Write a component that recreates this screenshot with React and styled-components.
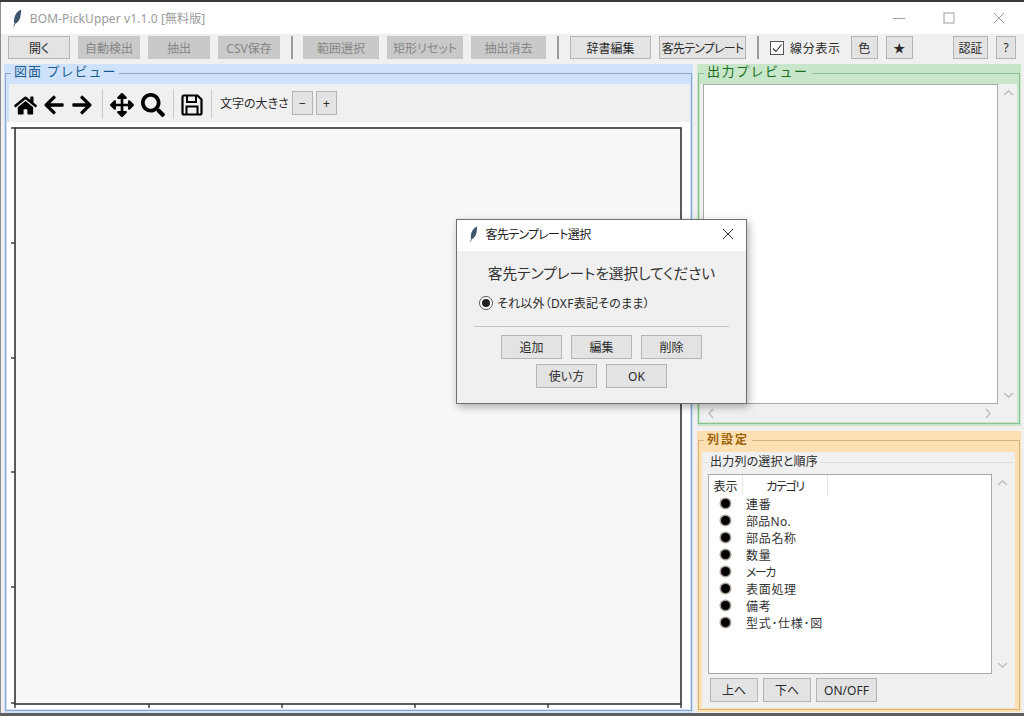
import React from "react";
import styled, { createGlobalStyle } from "styled-components";
import { FaHome, FaArrowLeft, FaArrowRight, FaArrowsAlt, FaSearch } from "react-icons/fa";

const FONT = `"Noto Sans", "Noto Sans CJK JP", sans-serif`;

const Global = createGlobalStyle`
  html, body { margin: 0; padding: 0; width: 1024px; height: 716px; overflow: hidden; background: #6d6d6d; }
  * { box-sizing: border-box; }
  body { font-family: ${FONT}; font-size: 12px; color: #222; font-feature-settings: "palt"; }
`;

const Page = styled.div`
  position: relative;
  width: 1024px;
  height: 716px;
  display: flex;
  flex-direction: column;
`;
const TopStrip = styled.div`height: 2px; flex: none; background: #3a3a3a;`;
const BottomStrip = styled.div`height: 3px; flex: none; background: #5f5f5f;`;
const Window = styled.div`
  flex: 1;
  min-height: 0;
  display: flex;
  flex-direction: column;
  background: #f0f0f0;
  border-left: 1px solid #8c8c8c;
`;
const TitleBar = styled.div`
  height: 32px;
  flex: none;
  display: flex;
  align-items: center;
  background: #fff;
  padding-left: 11px;
  color: #9a9a9a;
  font-size: 12px;
`;
const TitleText = styled.span`
  margin-left: 7px;
  letter-spacing: 0.1px;
`;
const WinControls = styled.div`
  margin-left: auto;
  display: flex;
  align-items: center;
  gap: 38px;
  padding-right: 19px;
`;
const Toolbar = styled.div`
  height: 30px;
  flex: none;
  display: flex;
  align-items: flex-start;
  gap: 8px;
  padding: 2px 8px 0 7px;
`;
const Btn = styled.div`
  width: ${(p) => p.$w}px;
  height: ${(p) => p.$h || 23}px;
  flex: none;
  display: flex;
  align-items: center;
  justify-content: center;
  font-size: 12px;
  white-space: nowrap;
  letter-spacing: ${(p) => p.$sp || 0}px;
  border: 1px solid ${(p) => (p.$off ? "#c8c8c8" : "#b4b4b4")};
  background: ${(p) => (p.$off ? "#c9c9c9" : "#e3e3e3")};
  color: ${(p) => (p.$off ? "#868686" : "#2a2a2a")};
  margin-left: ${(p) => p.$ml || 0}px;
`;
const PushRight = styled.div`margin-left: auto;`;
const Sep = styled.div`
  width: 1.5px;
  height: 23px;
  flex: none;
  margin: 0 2.5px 0 3px;
  background: #9b9b9b;
`;
const CheckGroup = styled.label`
  display: flex;
  align-items: center;
  gap: 6px;
  height: 23px;
  margin-left: 1px;
  font-size: 12px;
  letter-spacing: 0.7px;
  color: #2a2a2a;
`;
const CheckBox = styled.span`
  width: 14px;
  height: 14px;
  display: flex;
  align-items: center;
  justify-content: center;
  background: #fff;
  border: 1px solid #555;
`;
const Main = styled.div`
  flex: 1;
  min-height: 0;
  display: flex;
  gap: 4px;
  padding: 0 3px 0 3px;
`;
const Shell = styled.div`
  background: ${(p) => p.$bg};
  display: flex;
  flex-direction: column;
  padding: 1px 1px 2px 1px;
  ${(p) => (p.$h ? `height: ${p.$h}px; flex: none;` : "flex: 1; min-width: 0;")}
`;
const Field = styled.fieldset`
  flex: 1;
  min-height: 0;
  min-width: 0;
  margin: 0;
  padding: 3px 1px 1px 1px;
  display: flex;
  flex-direction: column;
  border: 1px solid ${(p) => p.$line};
`;
const Legend = styled.legend`
  padding: 0 3px;
  margin-left: 4px;
  line-height: ${(p) => p.$lh || 13}px;
  height: 16px;
  font-size: ${(p) => p.$fs || 13}px;
  font-weight: ${(p) => p.$fw || 400};
  font-feature-settings: normal;
  letter-spacing: ${(p) => p.$sp}px;
  color: ${(p) => p.$c};
`;
const RightCol = styled.div`
  width: 324px;
  flex: none;
  display: flex;
  flex-direction: column;
  gap: 5px;
`;
const PlotToolbar = styled.div`
  height: 38px;
  flex: none;
  margin-left: 2px;
  display: flex;
  align-items: center;
  background: #f0f0f0;
  padding-left: 3px;
  color: #000;
`;
const ToolSlot = styled.div`
  width: ${(p) => p.$w}px;
  flex: none;
  display: flex;
  justify-content: center;
  align-items: center;
  margin-top: 4px;
  font-size: ${(p) => p.$s}px;
`;
const ToolSep = styled.div`
  width: 1px;
  height: 30px;
  flex: none;
  margin: 2px ${(p) => p.$r}px 0 ${(p) => p.$l}px;
  background: #c9c9c9;
`;
const ToolLabel = styled.span`
  width: 72px;
  flex: none;
  margin-left: 4px;
  font-size: 12px;
  color: #2a2a2a;
  white-space: nowrap;
`;
const SmallBtn = styled(Btn)`margin-right: 3px;`;
const Canvas = styled.div`
  flex: 1;
  min-height: 0;
  background: #fff;
`;
const PlotSvg = styled.svg`display: block;`;
const OutputBody = styled.div`
  flex: 1;
  min-height: 0;
  background: #f0f0f0;
  display: grid;
  grid-template-columns: 295px 1fr;
  grid-template-rows: 320px 1fr;
  padding-left: 3px;
  margin-right: 1px;
`;
const TextArea = styled.div`
  background: #fff;
  border: 1px solid #a8a8a8;
`;
const VBar = styled.div`
  display: flex;
  flex-direction: column;
  justify-content: space-between;
  align-items: center;
  padding: 4px 0 3px;
  width: 18px;
  margin-left: 1px;
`;
const HBar = styled.div`
  display: flex;
  justify-content: space-between;
  align-items: center;
  height: 18px;
  padding: 0 4px 0 3px;
`;
const OrangeBody = styled.div`
  flex: 1;
  min-height: 0;
  margin: 1px 3px 0 2px;
  background: #f0f0f0;
  display: flex;
  flex-direction: column;
`;
const SubField = styled.fieldset`
  flex: 1;
  min-height: 0;
  margin: 2px 1px 0 1px;
  padding: 4px 0 6px 5px;
  display: flex;
  flex-direction: column;
  border: none;
  border-top: 1px solid #dcdcdc;
`;
const SubLegend = styled.legend`
  padding: 0 2px;
  margin-left: 0;
  height: 16px;
  line-height: 15px;
  font-size: 12px;
  letter-spacing: 0.2px;
  color: #2a2a2a;
`;
const TreeRow = styled.div`
  display: flex;
  height: 200px;
  flex: none;
`;
const Tree = styled.div`
  width: 284px;
  flex: none;
  background: #fff;
  border: 1px solid #a8a8a8;
`;
const TreeHead = styled.div`
  height: 20px;
  display: flex;
  align-items: center;
  font-size: 12px;
  color: #2a2a2a;
`;
const HeadCell = styled.div`
  width: ${(p) => p.$w}px;
  height: 100%;
  padding-top: 1px;
  display: flex;
  align-items: center;
  justify-content: center;
  letter-spacing: ${(p) => p.$sp || 0}px;
  border-right: 1px solid #e5e5e5;
`;
const TreeItem = styled.div`
  height: 17px;
  display: flex;
  align-items: center;
  font-size: 12px;
  letter-spacing: ${(p) => p.$sp}px;
  color: #333;
`;
const Bullet = styled.span`
  width: 9px;
  height: 9px;
  flex: none;
  margin: 0 16px 0 12px;
  border-radius: 50%;
  background: #000;
  box-shadow: 0 0 0 1.5px #a89f97;
`;
const TreeBtns = styled.div`
  display: flex;
  gap: 5px;
  padding: 4px 0 0 2px;
`;
const Dialog = styled.div`
  position: absolute;
  left: 456px;
  top: 219px;
  width: 291px;
  height: 185px;
  display: flex;
  flex-direction: column;
  background: #f0f0f0;
  border: 1px solid #6f6f6f;
  box-shadow: 2px 3px 8px rgba(0, 0, 0, 0.3);
`;
const DialogTitle = styled.div`
  height: 31px;
  flex: none;
  display: flex;
  align-items: center;
  justify-content: space-between;
  background: #fff;
  padding: 0 12px 3px;
  color: #222;
`;
const DialogTitleLeft = styled.div`
  display: flex;
  align-items: center;
  gap: 7px;
  font-size: 12px;
  letter-spacing: -0.7px;
`;
const DialogHeading = styled.div`
  text-align: center;
  font-size: 14.7px;
  line-height: 20px;
  margin-top: 12px;
  color: #333;
`;
const RadioRow = styled.div`
  display: flex;
  align-items: center;
  gap: 4px;
  margin: 10px 0 0 22px;
  height: 20px;
  font-size: 12px;
  letter-spacing: 0.25px;
  color: #2a2a2a;
`;
const Radio = styled.span`
  width: 14px;
  height: 14px;
  display: flex;
  align-items: center;
  justify-content: center;
  border-radius: 50%;
  border: 1px solid #555;
  background: #fff;
  &::after {
    content: "";
    width: 8px;
    height: 8px;
    border-radius: 50%;
    background: #222;
  }
`;
const DialogRule = styled.div`
  height: 1px;
  margin: 13px 17px 0 17px;
  background: #c4c4c4;
`;
const DialogRow = styled.div`
  display: flex;
  justify-content: center;
  gap: 9px;
  margin-top: ${(p) => p.$mt}px;
`;

const Feather = ({ h = 18, color = "#3f556f" }) => (
  <svg width={h * 0.6} height={h} viewBox="0 0 10 18" aria-hidden="true">
    <path d="M8.8 0.6C5 2.2 2.4 5.6 1.8 9.6c-.3 2 -.2 3.6.2 4.8L1 17.4l.8.3 1-3c2.6-.8 4.4-3.4 5.2-7 .5-2.6.8-5 .8-7.1z" fill={color} />
  </svg>
);

const Chevron = ({ dir }) => {
  const d = {
    up: "M1 7 L5.5 3 L10 7",
    down: "M1 3 L5.5 7 L10 3",
    left: "M7 1 L3 5.5 L7 10",
    right: "M3 1 L7 5.5 L3 10",
  }[dir];
  return (
    <svg width="11" height="11" viewBox="0 0 11 11" aria-hidden="true">
      <path d={d} fill="none" stroke="#bdbdbd" strokeWidth="1.4" />
    </svg>
  );
};

const WinMin = () => (
  <svg width="12" height="12" viewBox="0 0 12 12"><path d="M0 6.5H12" stroke="#a0a0a0" strokeWidth="1" /></svg>
);
const WinMax = () => (
  <svg width="12" height="12" viewBox="0 0 12 12"><rect x="1" y="1" width="10" height="10" fill="none" stroke="#a0a0a0" strokeWidth="1" /></svg>
);
const WinClose = ({ color = "#a0a0a0" }) => (
  <svg width="12" height="12" viewBox="0 0 12 12"><path d="M1 1L11 11M11 1L1 11" stroke={color} strokeWidth="1" /></svg>
);

const SaveIcon = () => (
  <svg width="22" height="22" viewBox="0 0 22 22" aria-hidden="true">
    <path d="M2.5 1.5H16.5L20.5 5.5V19a1.5 1.5 0 0 1-1.5 1.5H3A1.5 1.5 0 0 1 1.5 19V3A1.5 1.5 0 0 1 2.5 1.5Z" fill="none" stroke="#000" strokeWidth="2.2" />
    <path d="M6 2V8H15V2" fill="none" stroke="#000" strokeWidth="2" />
    <path d="M5.5 20V12.5H16.5V20" fill="none" stroke="#000" strokeWidth="2" />
  </svg>
);

const Plot = () => {
  const ys = [6, 121, 236, 350, 465, 581];
  const xs = [8, 142, 275, 408, 541, 674];
  return (
    <PlotSvg width="681" height="586" viewBox="0 0 681 586">
      <rect x="8" y="6" width="666" height="576" fill="#f7f7f7" stroke="#333" strokeWidth="1.6" />
      {ys.map((y) => <path key={y} d={`M4 ${y}H8`} stroke="#333" strokeWidth="1.4" />)}
      {xs.map((x) => <path key={x} d={`M${x} 582V586`} stroke="#333" strokeWidth="1.4" />)}
    </PlotSvg>
  );
};

const COLUMNS = [
  { label: "連番", sp: 0.7 },
  { label: "部品No.", sp: 0.3 },
  { label: "部品名称", sp: 0.7 },
  { label: "数量", sp: 0.7 },
  { label: "メーカ", sp: -1.5 },
  { label: "表面処理", sp: 0.7 },
  { label: "備考", sp: 0.7 },
  { label: "型式･仕様･図", sp: 0.7 },
];

export default function App() {
  return (
    <Page>
      <Global />
      <TopStrip />
      <Window>
        <TitleBar>
          <Feather />
          <TitleText>BOM-PickUpper v1.1.0 [無料版]</TitleText>
          <WinControls>
            <WinMin />
            <WinMax />
            <WinClose />
          </WinControls>
        </TitleBar>
        <Toolbar>
          <Btn $w={62}>開く</Btn>
          <Btn $w={62} $off>自動検出</Btn>
          <Btn $w={62} $off>抽出</Btn>
          <Btn $w={62} $off>CSV保存</Btn>
          <Sep />
          <Btn $w={76} $off>範囲選択</Btn>
          <Btn $w={76} $off>矩形リセット</Btn>
          <Btn $w={75} $off>抽出消去</Btn>
          <Sep />
          <Btn $w={81} $ml={1}>辞書編集</Btn>
          <Btn $w={87} $sp={-0.8}>客先テンプレート</Btn>
          <Sep />
          <CheckGroup>
            <CheckBox>
              <svg width="12" height="12" viewBox="0 0 12 12"><path d="M2 6.5L5 9.5L10.5 2.5" fill="none" stroke="#333" strokeWidth="1.1" /></svg>
            </CheckBox>
            線分表示
          </CheckGroup>
          <Btn $w={27} $ml={2}>色</Btn>
          <Btn $w={27}>★</Btn>
          <PushRight />
          <Btn $w={35}>認証</Btn>
          <Btn $w={20}>?</Btn>
        </Toolbar>
        <Main>
          <Shell $bg="#cfe2fb">
            <Field $line="#8ea6c4">
              <Legend $c="#1c5c8e" $sp={1}>図面 プレビュー</Legend>
              <PlotToolbar>
                <ToolSlot $w={26} $s={23}><FaHome /></ToolSlot>
                <ToolSlot $w={32} $s={22}><FaArrowLeft /></ToolSlot>
                <ToolSlot $w={24} $s={22}><FaArrowRight /></ToolSlot>
                <ToolSep $l={8} $r={6} />
                <ToolSlot $w={26} $s={24}><FaArrowsAlt /></ToolSlot>
                <ToolSlot $w={35} $s={24}><FaSearch /></ToolSlot>
                <ToolSep $l={3} $r={6} />
                <ToolSlot $w={24} $s={24}><SaveIcon /></ToolSlot>
                <ToolSep $l={7} $r={4} />
                <ToolLabel>文字の大きさ</ToolLabel>
                <SmallBtn $w={21} $h={24}>−</SmallBtn>
                <SmallBtn $w={21} $h={24}>+</SmallBtn>
              </PlotToolbar>
              <Canvas>
                <Plot />
              </Canvas>
            </Field>
          </Shell>
          <RightCol>
            <Shell $bg="#c8e6c9" $h={362}>
              <Field $line="#8fbf94">
                <Legend $c="#1b6e20" $sp={1.5}>出力プレビュー</Legend>
                <OutputBody>
                  <TextArea />
                  <VBar><Chevron dir="up" /><Chevron dir="down" /></VBar>
                  <HBar><Chevron dir="left" /><Chevron dir="right" /></HBar>
                </OutputBody>
              </Field>
            </Shell>
            <Shell $bg="#ffe0b2" $h={281}>
              <Field $line="#d9b27c">
                <Legend $c="#9a6208" $sp={2} $fs={12} $fw={700} $lh={16}>列設定</Legend>
                <OrangeBody>
                  <SubField>
                    <SubLegend>出力列の選択と順序</SubLegend>
                    <TreeRow>
                      <Tree>
                        <TreeHead>
                          <HeadCell $w={34}>表示</HeadCell>
                          <HeadCell $w={85} $sp={-1.4}>カテゴリ</HeadCell>
                        </TreeHead>
                        {COLUMNS.map((c) => (
                          <TreeItem key={c.label} $sp={c.sp}><Bullet />{c.label}</TreeItem>
                        ))}
                      </Tree>
                      <VBar><Chevron dir="up" /><Chevron dir="down" /></VBar>
                    </TreeRow>
                    <TreeBtns>
                      <Btn $w={48} $h={24}>上へ</Btn>
                      <Btn $w={48} $h={24}>下へ</Btn>
                      <Btn $w={61} $h={24}>ON/OFF</Btn>
                    </TreeBtns>
                  </SubField>
                </OrangeBody>
              </Field>
            </Shell>
          </RightCol>
        </Main>
      </Window>
      <BottomStrip />
      <Dialog>
        <DialogTitle>
          <DialogTitleLeft>
            <Feather h={16} />
            客先テンプレート選択
          </DialogTitleLeft>
          <WinClose color="#333" />
        </DialogTitle>
        <DialogHeading>客先テンプレートを選択してください</DialogHeading>
        <RadioRow><Radio />それ以外（DXF表記そのまま）</RadioRow>
        <DialogRule />
        <DialogRow $mt={8}>
          <Btn $w={61} $h={24}>追加</Btn>
          <Btn $w={61} $h={24}>編集</Btn>
          <Btn $w={61} $h={24}>削除</Btn>
        </DialogRow>
        <DialogRow $mt={5}>
          <Btn $w={61} $h={24}>使い方</Btn>
          <Btn $w={61} $h={24}>OK</Btn>
        </DialogRow>
      </Dialog>
    </Page>
  );
}
